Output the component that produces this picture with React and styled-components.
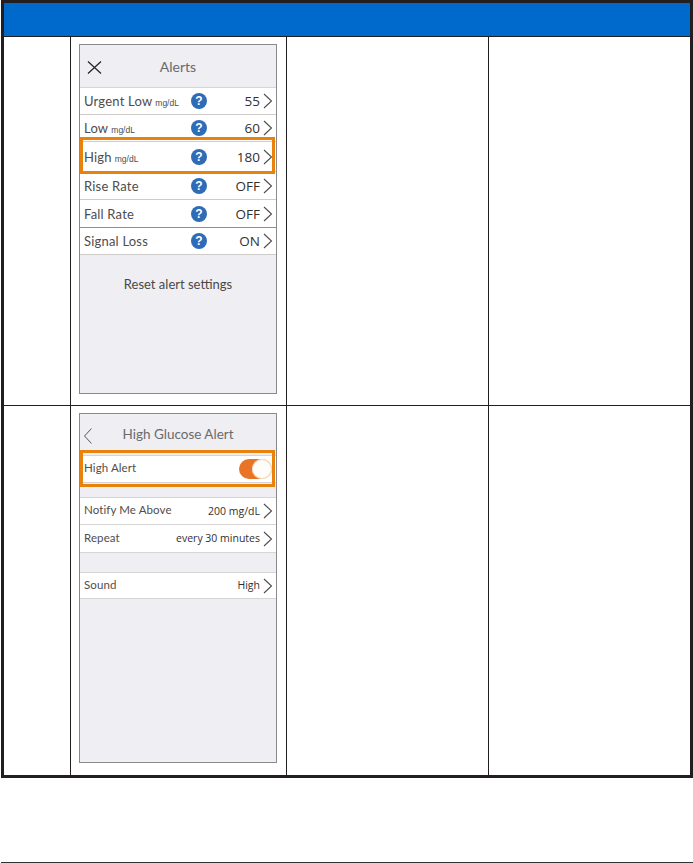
import React from 'react'
import styled, { createGlobalStyle } from 'styled-components'

const Global = createGlobalStyle`
  html, body { margin: 0; padding: 0; background: #fff; }
  body { font-family: "Lato", "Open Sans", sans-serif; width: 693px; height: 863px; overflow: hidden; }
`

const Page = styled.div`
  height: 863px;
  display: flex;
  flex-direction: column;
  padding-left: 1px;
  box-sizing: border-box;
`

const Table = styled.div`
  width: 692px;
  box-sizing: border-box;
  border: 3px solid #231f20;
`

const HeadBar = styled.div`
  height: 33px;
  background: #0069cc;
  border-bottom: 1px solid #231f20;
`

const TableRow = styled.div`
  display: grid;
  grid-template-columns: 67px 216px 202px 1fr;
  height: ${p => p.$h}px;
  box-sizing: border-box;
  border-bottom: ${p => (p.$last ? 'none' : '1px solid #231f20')};
`

const Cell = styled.div`
  box-sizing: border-box;
  border-right: ${p => (p.$last ? 'none' : '1px solid #231f20')};
  padding: 7px 8px;
`

const Screen = styled.div`
  width: 198px;
  height: 350px;
  box-sizing: border-box;
  border: 1px solid #8a8a8c;
  background: #eeeef3;
  color: #4b4848;
`

const NavBar = styled.div`
  height: ${p => p.$h}px;
  box-sizing: border-box;
  display: flex;
  align-items: center;
  justify-content: center;
  position: relative;
  font-size: ${p => p.$size}px;
  color: #6a6a6c;
  padding-bottom: ${p => p.$lift || 0}px;
  border-bottom: ${p => (p.$line ? '1px solid #d6d4d4' : 'none')};
`

const NavIcon = styled.svg`
  position: absolute;
  left: ${p => p.$left}px;
  top: ${p => p.$top}px;
`

const Row = styled.div`
  height: ${p => p.$h}px;
  box-sizing: border-box;
  background: #fff;
  border-bottom: 1px solid ${p => p.$line || '#cfcbc9'};
  display: grid;
  grid-template-columns: ${p => (p.$help ? '107px 24px 1fr 14px' : '1fr auto 14px')};
  align-items: center;
  padding-left: 4px;
  position: relative;
  font-size: 12.5px;
  margin-top: ${p => p.$gap || 0}px;
  border-top: ${p => (p.$topLine ? '1px solid #d6d4d4' : 'none')};
`

const Highlight = styled.div`
  position: absolute;
  z-index: 1;
  left: 0;
  right: 1px;
  top: ${p => p.$top}px;
  bottom: ${p => p.$bottom}px;
  border: 3px solid #e8820c;
  pointer-events: none;
`

const Label = styled.span`
  font-size: 13px;
  letter-spacing: 0.2px;
  white-space: nowrap;
  color: #4f4c4c;
`

const SmallLabel = styled(Label)`
  font-size: 11.5px;
  letter-spacing: 0.1px;
  color: #504d4d;
  padding-bottom: 3px;
`

const Unit = styled.span`
  font-size: 8.5px;
  letter-spacing: 0;
  font-family: "Liberation Sans", Arial, sans-serif;
  margin-left: 3px;
`

const Value = styled.span`
  font-family: "Open Sans", sans-serif;
  font-size: ${p => p.$size || 12}px;
  text-align: right;
  padding-right: 2px;
  padding-bottom: ${p => p.$lift || 0}px;
  white-space: nowrap;
  color: #333030;
`

const HelpDot = styled.span`
  width: 16px;
  height: 16px;
  border-radius: 50%;
  background: #2f6cb8;
  color: #fff;
  font-family: "Liberation Sans", Arial, sans-serif;
  font-weight: 700;
  font-size: 12px;
  line-height: 16px;
  text-align: center;
  justify-self: start;
`

const ResetLabel = styled.div`
  text-align: center;
  font-size: 13px;
  padding-top: 21px;
  color: #4b4848;
`

const Toggle = styled.span`
  width: 33px;
  height: 20px;
  border-radius: 10px;
  background: #e97425;
  position: relative;
  justify-self: end;
  grid-column: 2 / 4;
  margin-right: 4px;
`

const Knob = styled.span`
  position: absolute;
  right: 0;
  top: 0;
  width: 20px;
  height: 20px;
  border-radius: 50%;
  background: #fffdfa;
  box-shadow: 0 0 0 1px #f1d9b8 inset;
`

const FooterRule = styled.div`
  margin-top: auto;
  height: 1px;
  background: #333;
`

const Chevron = () => (
  <svg width="11" height="18" viewBox="0 0 11 18">
    <path d="M2 2 L9.5 9 L2 16" fill="none" stroke="#4f4c4c" strokeWidth="1.1" />
  </svg>
)

const Help = () => <HelpDot>?</HelpDot>

const AlertRow = ({ h, label, unit, value, line, highlight }) => (
  <Row $h={h} $help $line={line}>
    <Label>
      {label}
      {unit && <Unit>{unit}</Unit>}
    </Label>
    <Help />
    <Value $size={13.5}>{value}</Value>
    <Chevron />
    {highlight && <Highlight $top={-5} $bottom={-3} />}
  </Row>
)

const PlainRow = ({ h, label, value, gap, topLine }) => (
  <Row $h={h} $gap={gap} $topLine={topLine} $line="#d6d4d4">
    <SmallLabel>{label}</SmallLabel>
    <Value $size={10.5} $lift={1}>{value}</Value>
    <Chevron />
  </Row>
)

const AlertsScreen = () => (
  <Screen>
    <NavBar $h={43} $size={14} $line>
      <NavIcon $left={7} $top={16} width="15" height="13" viewBox="0 0 15 13">
        <path d="M1 0.5 L14 12.5 M14 0.5 L1 12.5" stroke="#222" strokeWidth="1.2" fill="none" />
      </NavIcon>
      Alerts
    </NavBar>
    <AlertRow h={27} label="Urgent Low" unit="mg/dL" value="55" />
    <AlertRow h={27} label="Low" unit="mg/dL" value="60" />
    <AlertRow h={30} label="High" unit="mg/dL" value="180" highlight />
    <AlertRow h={28} label="Rise Rate" value="OFF" />
    <AlertRow h={28} label="Fall Rate" value="OFF" line="#8f8f8f" />
    <AlertRow h={27} label="Signal Loss" value="ON" />
    <ResetLabel>Reset alert settings</ResetLabel>
  </Screen>
)

const HighAlertScreen = () => (
  <Screen>
    <NavBar $h={41} $size={13.5} $lift={2}>
      <NavIcon $left={3} $top={13} width="10" height="18" viewBox="0 0 10 18">
        <path d="M8.5 1.5 L1.5 9 L8.5 16.5" stroke="#555" strokeWidth="1" fill="none" />
      </NavIcon>
      High Glucose Alert
    </NavBar>
    <Row $h={28} $line="#d6d4d4" $topLine>
      <SmallLabel>High Alert</SmallLabel>
      <Toggle><Knob /></Toggle>
      <Highlight $top={-6} $bottom={-5} />
    </Row>
    <PlainRow h={28} gap={14} topLine label="Notify Me Above" value="200 mg/dL" />
    <PlainRow h={28} label="Repeat" value="every 30 minutes" />
    <PlainRow h={27} gap={19} topLine label="Sound" value="High" />
  </Screen>
)

const BodyRow = ({ h, last, children }) => (
  <TableRow $h={h} $last={last}>
    <Cell />
    <Cell>{children}</Cell>
    <Cell />
    <Cell $last />
  </TableRow>
)

export default function App() {
  return (
    <Page>
      <Global />
      <Table>
        <HeadBar />
        <BodyRow h={369}><AlertsScreen /></BodyRow>
        <BodyRow h={369} last><HighAlertScreen /></BodyRow>
      </Table>
      <FooterRule />
    </Page>
  )
}
